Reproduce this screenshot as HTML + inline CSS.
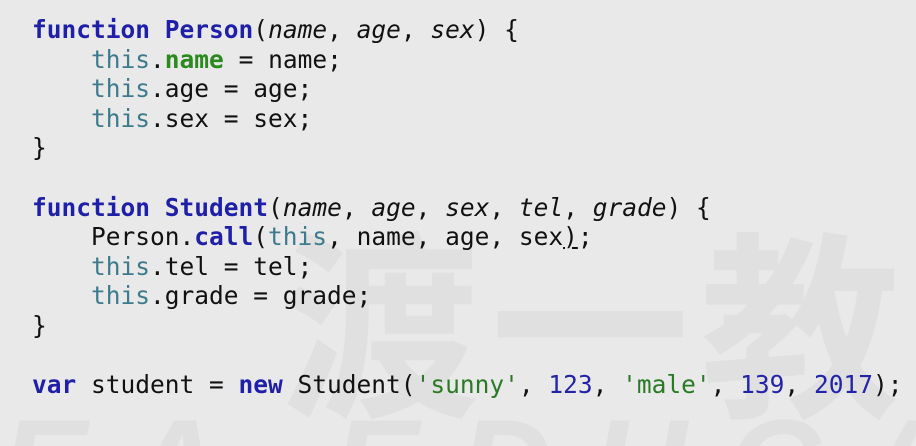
<!DOCTYPE html><html style="overflow:hidden;height:446px"><head><style>
body{margin:0;width:916px;height:446px;overflow:hidden;background:#e9e9e9;position:relative}
.clip{position:absolute;left:0;top:0;width:916px;height:446px;overflow:hidden}
.wm{position:absolute;color:#e0e0e0;font-family:"Liberation Sans","Noto Sans CJK SC",sans-serif;font-weight:bold;white-space:nowrap}
pre{position:absolute;left:32px;top:15px;margin:0;font-family:"DejaVu Sans Mono",monospace;font-size:24.5px;line-height:29.6px;color:#111}
.k{color:#1f1fa8;font-weight:bold}.t{color:#3d7b8c}.g{color:#2a8a1e;font-weight:bold}.i{font-style:italic}.s{color:#2a7a25}.n{color:#2424a8}
</style></head><body>
<div class="clip">
<div class="wm" style="left:280px;top:170px;font-size:200px;letter-spacing:10px;width:636px;height:260px;overflow:hidden">渡一教育</div>
<div class="wm" style="left:0;top:390px;font-size:130px;font-style:italic;letter-spacing:40px;width:916px;height:56px;overflow:hidden">EA EDUCATION</div>
</div>
<pre><span class="k">function</span> <span class="k">Person</span>(<span class="i">name</span>, <span class="i">age</span>, <span class="i">sex</span>) {
    <span class="t">this</span>.<span class="g">name</span> = name;
    <span class="t">this</span>.age = age;
    <span class="t">this</span>.sex = sex;
}

<span class="k">function</span> <span class="k">Student</span>(<span class="i">name</span>, <span class="i">age</span>, <span class="i">sex</span>, <span class="i">tel</span>, <span class="i">grade</span>) {
    Person.<span class="k">call</span>(<span class="t">this</span>, name, age, sex<u>)</u>;
    <span class="t">this</span>.tel = tel;
    <span class="t">this</span>.grade = grade;
}

<span class="k">var</span> student = <span class="k">new</span> Student(<span class="s">'sunny'</span>, <span class="n">123</span>, <span class="s">'male'</span>, <span class="n">139</span>, <span class="n">2017</span>);</pre>
</body></html>
